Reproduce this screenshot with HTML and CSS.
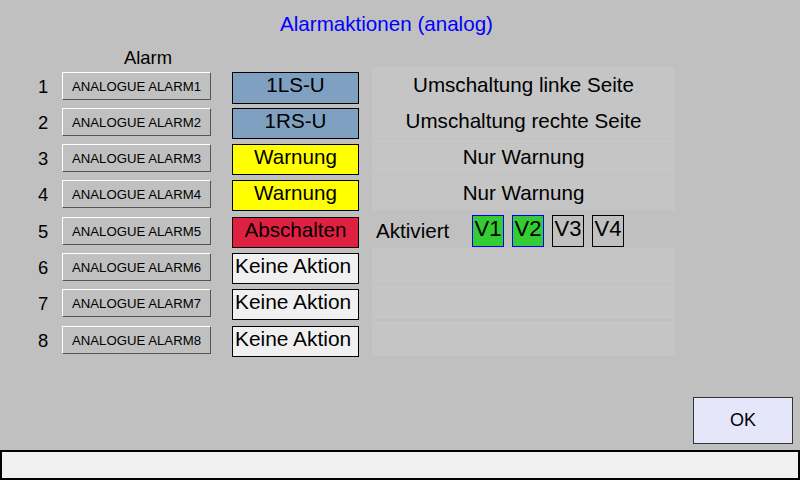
FILE: index.html
```html
<!DOCTYPE html>
<html lang="de">
<head>
    <meta charset="UTF-8">
    <title>Alarmaktionen (analog)</title>
    <link rel="stylesheet" href="styles.css">
</head>
<body>
    <div class="screen">
        <h1 class="title">Alarmaktionen (analog)</h1>
        <div class="col-head">Alarm</div>

        <div class="rows">
            <div class="row">
                <span class="num">1</span>
                <button class="alarm-btn">ANALOGUE ALARM1</button>
                <div class="action blue tall">1LS-U</div>
                <div class="desc joined">Umschaltung linke Seite</div>
            </div>
            <div class="row">
                <span class="num">2</span>
                <button class="alarm-btn">ANALOGUE ALARM2</button>
                <div class="action blue">1RS-U</div>
                <div class="desc">Umschaltung rechte Seite</div>
            </div>
            <div class="row">
                <span class="num">3</span>
                <button class="alarm-btn">ANALOGUE ALARM3</button>
                <div class="action yellow">Warnung</div>
                <div class="desc">Nur Warnung</div>
            </div>
            <div class="row">
                <span class="num">4</span>
                <button class="alarm-btn">ANALOGUE ALARM4</button>
                <div class="action yellow">Warnung</div>
                <div class="desc">Nur Warnung</div>
            </div>
            <div class="row">
                <span class="num">5</span>
                <button class="alarm-btn">ANALOGUE ALARM5</button>
                <div class="action red">Abschalten</div>
                <div class="activ">
                    <span class="activ-label">Aktiviert</span>
                    <span class="vbox on">V1</span>
                    <span class="vbox on">V2</span>
                    <span class="vbox">V3</span>
                    <span class="vbox">V4</span>
                </div>
            </div>
            <div class="row">
                <span class="num">6</span>
                <button class="alarm-btn">ANALOGUE ALARM6</button>
                <div class="action none">Keine Aktion</div>
                <div class="desc"></div>
            </div>
            <div class="row">
                <span class="num">7</span>
                <button class="alarm-btn">ANALOGUE ALARM7</button>
                <div class="action none">Keine Aktion</div>
                <div class="desc"></div>
            </div>
            <div class="row">
                <span class="num">8</span>
                <button class="alarm-btn">ANALOGUE ALARM8</button>
                <div class="action none">Keine Aktion</div>
                <div class="desc"></div>
            </div>
        </div>

        <div class="footer">
            <button class="ok-btn">OK</button>
            <div class="status-bar"></div>
        </div>
    </div>
</body>
</html>
```

FILE: styles.css
```css
body {
    margin: 0;
    background: #c0c0c0;
    font-family: "Liberation Sans", Arial, sans-serif;
    color: #000;
}
.screen {
    width: 800px;
    height: 480px;
    display: flex;
    flex-direction: column;
    overflow: hidden;
}
.title {
    width: 773px;
    margin: 0;
    padding-top: 12px;
    font-size: 20.6px;
    font-weight: normal;
    line-height: 23px;
    color: #0000ff;
    text-align: center;
}
.col-head {
    margin-top: 12px;
    padding-left: 124px;
    font-size: 18.4px;
    line-height: 21px;
}
.rows {
    margin-top: 4px;
    display: grid;
    grid-template-rows: 36px 36px 36px 37px 36px 36px 37px 36px;
}
.row {
    display: flex;
    align-items: flex-start;
    padding-left: 30px;
}
.num {
    width: 26px;
    padding-top: 4px;
    font-size: 18.4px;
    line-height: 21px;
    text-align: center;
}
.alarm-btn {
    margin-left: 6px;
    width: 149px;
    height: 28px;
    box-sizing: border-box;
    padding: 0;
    background: #c0c0c0;
    border: 1px solid;
    border-color: #fff #555 #555 #fff;
    font-family: inherit;
    font-size: 13.2px;
    line-height: 15px;
    color: #000;
}
.action {
    margin-left: 21px;
    width: 127px;
    height: 31px;
    box-sizing: border-box;
    border: 1px solid #000;
    font-size: 20.6px;
    line-height: 23px;
    text-align: center;
}
.action.tall { height: 32px; }
.blue { background: #7fa0c0; }
.yellow { background: #ffff00; }
.red { background: #e02040; }
.none { background: #f0f0f0; text-align: left; padding-left: 2px; font-size: 20.9px; }
.desc {
    margin: -5px 0 0 13px;
    width: 303px;
    height: 35px;
    box-sizing: border-box;
    padding-top: 6px;
    background: #c5c5c5;
    font-size: 20.6px;
    line-height: 23px;
    text-align: center;
}
.desc.joined { height: 36px; }
.activ {
    margin: -5px 0 0 13px;
    padding: 3px 0 0 4px;
    display: flex;
    align-items: flex-start;
    gap: 8px;
}
.activ-label {
    width: 88px;
    margin-top: 4px;
    font-size: 20.6px;
    line-height: 23px;
}
.vbox {
    width: 32px;
    height: 32px;
    box-sizing: border-box;
    border: 1px solid #000;
    font-size: 22px;
    line-height: 25px;
    text-align: center;
}
.vbox.on {
    background: #33cc33;
    border-color: #0000ff;
}
.footer {
    margin-top: auto;
    display: flex;
    flex-direction: column;
}
.ok-btn {
    align-self: flex-end;
    margin-right: 7px;
    width: 100px;
    height: 47px;
    background: #e6e6fa;
    border: 1px solid #333;
    font-family: inherit;
    font-size: 18px;
    color: #000;
}
.status-bar {
    margin-top: 6px;
    height: 30px;
    box-sizing: border-box;
    background: #f0f0f0;
    border: 2px solid #000;
}
```
